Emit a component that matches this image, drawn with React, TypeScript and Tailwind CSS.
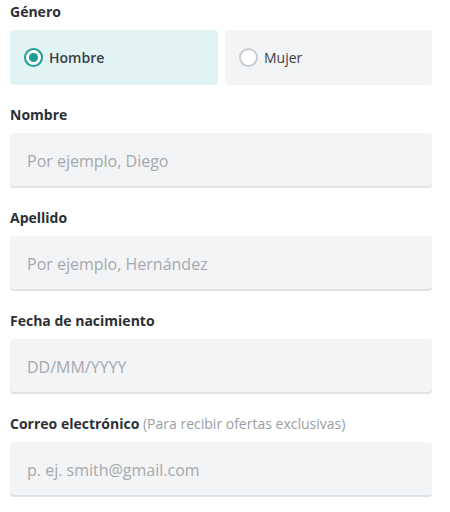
import { useState } from 'react';

const FIELDS = [
  { id: 'nombre', label: 'Nombre', placeholder: 'Por ejemplo, Diego' },
  { id: 'apellido', label: 'Apellido', placeholder: 'Por ejemplo, Hernández' },
  { id: 'fecha', label: 'Fecha de nacimiento', placeholder: 'DD/MM/YYYY' },
  {
    id: 'correo',
    label: 'Correo electrónico',
    hint: '(Para recibir ofertas exclusivas)',
    placeholder: 'p. ej. smith@gmail.com',
  },
];

function Radio({ checked }: { checked: boolean }) {
  return (
    <span
      className={`flex h-[19px] w-[19px] items-center justify-center rounded-full border-2 ${
        checked ? 'border-[#1f9c96] bg-white' : 'border-[#c9ccd0] bg-white'
      }`}
    >
      {checked && <span className="h-[9px] w-[9px] rounded-full bg-[#1f9c96]" />}
    </span>
  );
}

export default function App() {
  const [gender, setGender] = useState<'h' | 'm'>('h');

  return (
    <div className="h-[512px] w-[450px] bg-white pl-[10px] pt-[3px] font-['Open_Sans',sans-serif]">
      <div className="w-[422px]">
        {/* Género */}
        <div className="text-[14px] font-bold leading-[18px] text-[#2c3035]">Género</div>
        <div className="mt-[9px] flex gap-[7px]">
          <button
            onClick={() => setGender('h')}
            className={`flex h-[55px] w-[208px] items-center gap-[6px] rounded-[4px] pl-[14px] ${
              gender === 'h' ? 'bg-[#e1f3f3]' : 'bg-[#f3f4f6]'
            }`}
          >
            <Radio checked={gender === 'h'} />
            <span className="text-[14px] font-semibold text-[#3a3e44]">Hombre</span>
          </button>
          <button
            onClick={() => setGender('m')}
            className={`flex h-[55px] w-[207px] items-center gap-[6px] rounded-[4px] pl-[14px] ${
              gender === 'm' ? 'bg-[#e1f3f3]' : 'bg-[#f3f4f6]'
            }`}
          >
            <Radio checked={gender === 'm'} />
            <span className="text-[14px] text-[#3a3e44]">Mujer</span>
          </button>
        </div>

        {/* Campos */}
        {FIELDS.map((f) => (
          <div key={f.id} className="mt-[21px]">
            <div className="text-[14px] leading-[18px] text-[#2c3035]">
              <span className="font-bold">{f.label}</span>
              {f.hint && <span className="text-[14px] text-[#9a9ea3]"> {f.hint}</span>}
            </div>
            <input
              placeholder={f.placeholder}
              className="mt-[9px] block h-[55px] w-[422px] rounded-[4px] bg-[#f3f4f6] pl-[17px] text-[16px] text-[#2c3035] shadow-[inset_0_-2px_0_#dfe2e6] outline-none placeholder:text-[#a5a9ad]"
            />
          </div>
        ))}
      </div>
    </div>
  );
}
